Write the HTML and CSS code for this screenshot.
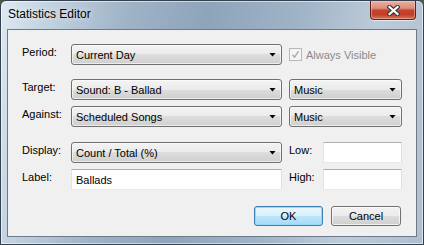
FILE: index.html
```html
<!DOCTYPE html>
<html lang="en">
<head>
  <meta charset="UTF-8">
  <title>Statistics Editor</title>
  <link rel="stylesheet" href="styles.css">
</head>
<body>
  <div class="window">

    <!-- Title bar -->
    <div class="titlebar">
      <span class="title">Statistics Editor</span>
      <div class="close-btn">
        <svg width="13" height="11" viewBox="0 0 13 11">
          <path d="M2.5 2 L10.5 9 M10.5 2 L2.5 9" stroke="#3b3b3b" stroke-width="4.4" stroke-linecap="square"/>
          <path d="M2.5 2 L10.5 9 M10.5 2 L2.5 9" stroke="#ffffff" stroke-width="2.2" stroke-linecap="square"/>
        </svg>
      </div>
    </div>

    <!-- Client area -->
    <div class="client">
      <div class="row row-period">
        <span class="cap">Period:</span>
        <div class="combo">Current Day<i class="arrow"></i></div>
        <div class="side check-wrap">
          <span class="checkbox">
            <svg width="9" height="9" viewBox="0 0 9 9">
              <path d="M1.5 4.8 L3.6 7.2 L7.6 1.2" fill="none" stroke="#a9a9a9" stroke-width="1.4"/>
            </svg>
          </span>
          <span class="disabled">Always Visible</span>
        </div>
      </div>

      <div class="row row-target">
        <span class="cap">Target:</span>
        <div class="combo">Sound: B - Ballad<i class="arrow"></i></div>
        <div class="side">
          <div class="combo small">Music<i class="arrow"></i></div>
        </div>
      </div>

      <div class="row row-against">
        <span class="cap">Against:</span>
        <div class="combo">Scheduled Songs<i class="arrow"></i></div>
        <div class="side">
          <div class="combo small">Music<i class="arrow"></i></div>
        </div>
      </div>

      <div class="row row-display">
        <span class="cap">Display:</span>
        <div class="combo">Count / Total (%)<i class="arrow"></i></div>
        <div class="side">
          <span class="side-cap">Low:</span>
          <div class="textbox short"></div>
        </div>
      </div>

      <div class="row row-label">
        <span class="cap">Label:</span>
        <div class="textbox">Ballads</div>
        <div class="side">
          <span class="side-cap">High:</span>
          <div class="textbox short"></div>
        </div>
      </div>

      <div class="buttons">
        <button class="btn default">OK</button>
        <button class="btn">Cancel</button>
      </div>
    </div>
  </div>
</body>
</html>
```

FILE: styles.css
```css
/* Base */
body {
  margin: 0;
  font-family: "Liberation Sans", Arial, sans-serif;
  font-size: 11px;
  color: #000;
  background: #4d5b45;
}

/* Window frame */
.window {
  width: 424px;
  height: 245px;
  box-sizing: border-box;
  border: 1px solid #34414f;
  border-radius: 6px 6px 0 0;
  padding: 0 6px 7px 6px;
  display: flex;
  flex-direction: column;
  overflow: hidden;
  background: linear-gradient(100deg, #dfe9f1 0%, #c3d3e1 10%, #9fb3c7 28%, #8ea4ba 45%, #a0b4c7 65%, #bccbd9 82%, #aebfd0 100%);
  box-shadow: inset 0 0 0 1px rgba(255, 255, 255, 0.55);
}

.titlebar {
  height: 28px;
  flex: none;
  display: flex;
  justify-content: space-between;
  align-items: flex-start;
}

.titlebar .title {
  font-size: 12px;
  padding: 6px 0 0 1px;
  color: #000;
  text-shadow: 0 0 6px rgba(255, 255, 255, 0.9);
}

.close-btn {
  width: 46px;
  height: 19px;
  margin-right: 1px;
  box-sizing: border-box;
  border: 1px solid #5e2219;
  border-top: none;
  border-radius: 0 0 4px 4px;
  display: flex;
  justify-content: center;
  align-items: center;
  background: linear-gradient(#eab0a2 0%, #dc8d78 40%, #c6452e 52%, #c13e28 75%, #d5765c 100%);
  box-shadow: 0 1px 0 rgba(255, 255, 255, 0.6), inset 0 0 0 1px rgba(255, 220, 210, 0.4);
}

/* Client area */
.client {
  flex: 1;
  border: 1px solid #6c7a89;
  background: #f0f0f0;
  padding: 0 14px;
}

.row {
  display: flex;
  align-items: flex-start;
}

.row-period  { margin-top: 14px; }
.row-target  { margin-top: 14px; }
.row-against { margin-top: 6px; }
.row-display { margin-top: 15px; }
.row-label   { margin-top: 6px; }

.cap {
  width: 49px;
  flex: none;
  line-height: 14px;
  padding-top: 1px;
}

.side {
  width: 113px;
  margin-left: 7px;
  display: flex;
  align-items: flex-start;
}

.side-cap {
  width: 34px;
  line-height: 14px;
  padding-top: 1px;
}

/* Combo boxes */
.combo {
  width: 211px;
  height: 21px;
  box-sizing: border-box;
  border: 1px solid #707070;
  border-radius: 3px;
  padding: 0 5px 0 4px;
  display: flex;
  align-items: center;
  background: linear-gradient(#f3f3f3 0%, #ebebeb 50%, #dddddd 50%, #cfcfcf 100%);
  box-shadow: inset 0 0 0 1px rgba(255, 255, 255, 0.6);
}

.combo.small {
  width: 113px;
}

.combo .arrow {
  margin-left: auto;
  width: 7px;
  height: 4px;
  background: #000;
  clip-path: polygon(0 0, 100% 0, 50% 100%);
}

/* Text boxes */
.textbox {
  width: 211px;
  height: 21px;
  box-sizing: border-box;
  border: 1px solid;
  border-color: #abadb3 #dbdfe6 #e3e9ef #e2e3ea;
  background: #fff;
  padding: 0 4px;
  display: flex;
  align-items: center;
}

.textbox.short {
  width: 79px;
}

/* Checkbox */
.check-wrap {
  align-self: center;
  align-items: center;
}

.checkbox {
  width: 13px;
  height: 13px;
  box-sizing: border-box;
  border: 1px solid #b8b8b8;
  background: #f4f4f4;
  display: flex;
  justify-content: center;
  align-items: center;
  margin-right: 4px;
}

.disabled {
  color: #8a8a8a;
}

/* Buttons */
.buttons {
  display: flex;
  justify-content: flex-end;
  gap: 8px;
  margin-top: 16px;
  padding-right: 1px;
}

.btn {
  width: 70px;
  height: 20px;
  box-sizing: border-box;
  border: 1px solid #707070;
  border-radius: 3px;
  font-family: inherit;
  font-size: 11px;
  color: #000;
  padding: 0;
  background: linear-gradient(#f2f2f2 0%, #ebebeb 50%, #dddddd 50%, #cfcfcf 100%);
  box-shadow: inset 0 0 0 1px rgba(255, 255, 255, 0.7);
}

.btn.default {
  width: 69px;
  border-color: #3c7fb1;
  background: linear-gradient(#eaf6fd 0%, #d9f0fc 50%, #bee6fd 50%, #a7d9f5 100%);
  box-shadow: inset 0 0 0 1px #96d9f9;
}
```
